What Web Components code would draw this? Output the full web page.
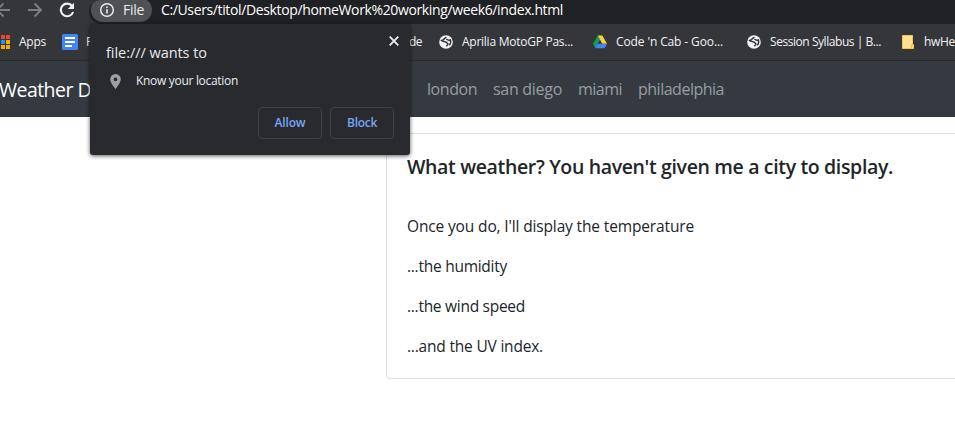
<!DOCTYPE html>
<html lang="en"><head><meta charset="utf-8"><title>Weather Dashboard</title>
<style>html,body{margin:0;width:955px;height:445px;overflow:hidden;background:#fff}</style></head>
<body><weather-window></weather-window>
<script>
const define = (name, html, setup) => customElements.define(name, class extends HTMLElement {
  connectedCallback() {
    if (this.shadowRoot) return;
    const t = document.createElement('template');
    t.innerHTML = html;
    this.attachShadow({mode: 'open'}).append(t.content.cloneNode(true));
    if (setup) setup(this, this.shadowRoot);
  }
});

/* A line of text tracked so that it occupies the width in its "w" attribute. */
define('fit-text', `<style>:host{display:inline-block;white-space:pre;flex:none}span{display:inline-block}</style><span><slot></slot></span>`, (el, root) => {
  const s = root.querySelector('span'), w = +el.getAttribute('w');
  if (w) {
    el.style.width = w + 'px';
    s.style.letterSpacing = (w - s.getBoundingClientRect().width) / el.textContent.length + 'px';
  }
});

const icons = {
  back: ['0 0 16 16', '<path d="M15 8H2M8.5 1.5 2 8l6.500 6.500" fill="none" stroke="#7d7e81" stroke-width="1.900"/>'],
  forward: ['0 0 16 16', '<path d="M1 8h13M7.500 1.500 14 8l-6.500 6.500" fill="none" stroke="#7d7e81" stroke-width="1.900"/>'],
  reload: ['0 0 16 16', '<path d="M13.200 4.200A6.300 6.300 0 1 0 14.100 10" fill="none" stroke="#f1f3f4" stroke-width="2.100"/><path d="M15 .8V7H8.800z" fill="#f1f3f4"/>'],
  info: ['0 0 16 16', '<circle cx="8" cy="8" r="6.300" fill="none" stroke="#e8eaed" stroke-width="1.500"/><path d="M7.200 7.200h1.600v4.200H7.200zM7.200 4.500h1.600v1.600H7.200z" fill="#e8eaed"/>'],
  apps: ['0 0 14 14', '<path fill="#ea4335" d="M0 0h3v4H0zM5 0h4v4H5zM10 0h4v4h-4z"/><path fill="#34a853" d="M0 5h3v4H0z"/><path fill="#2196f3" d="M5 5h4v4H5z"/><path fill="#f9ab00" d="M10 5h4v4h-4zM5 10h4v4H5zM10 10h4v4h-4z"/>'],
  docs: ['0 0 16 16', '<rect width="16" height="16" rx="1.500" fill="#4285f4"/><path fill="#fff" d="M3 3h10v2H3zM3 7h10v2H3zM3 11h7v2H3z"/>'],
  globe: ['0 0 16 16', '<circle cx="8" cy="8" r="7.800" fill="#f1f3f4"/><path d="M8.500 2.500C5.500 3.500 6.700 5.300 3 6.200c1.700 1.600 2.900 1.500 4.600 1.700 1.500.2.900 1.600 2.300 1.800.8.500-.3 1.900-1.500 3.200M8.500 4.600c1.300 1.300 2.600 1.600 4.500 1.100.8 2.500.2 4.500-1.300 6.100" fill="none" stroke="#35363a" stroke-width="1.700"/>'],
  drive: ['0 0 15 14', '<path fill="#0f9d58" d="M5 0 0 9l2.500 4.600L7.500 4.500z"/><path fill="#ffcd40" d="M5 0h5l5 9h-5z"/><path fill="#4285f4" d="M5 9h10l-2.500 4.700h-10z"/>'],
  note: ['0 0 12 14', '<path fill="#fde293" stroke="#f0c846" d="M.5.5h10v9h1v4H.5z"/><path d="M9.500 10v3.500M9 10h2" stroke="#e8bd37" fill="none"/>'],
  pin: ['0 0 11 15', '<path fill="#9aa0a6" fill-rule="evenodd" d="M5.500 0A5.300 5.300 0 0 0 .2 5.300C.2 9 5.500 15 5.500 15s5.300-6 5.300-9.700A5.300 5.300 0 0 0 5.500 0zm0 3.400a1.900 1.900 0 1 1 0 3.800 1.900 1.900 0 0 1 0-3.800z"/>'],
  close: ['0 0 10 10', '<path d="m.7.7 8.600 8.600M9.300.7.7 9.300" stroke="#e8eaed" stroke-width="1.900"/>']
};
define('ui-icon', `<style>:host{display:block;flex:none}svg{display:block;width:100%;height:100%}</style><svg></svg>`, (el, root) => {
  const [box, art] = icons[el.getAttribute('name')], s = root.querySelector('svg');
  s.setAttribute('viewBox', box); s.innerHTML = art;
});

define('address-bar', `<style>
:host{display:flex;height:24px;background:#35363a;font:14px/20px "Open Sans","Noto Sans",sans-serif;color:#fff}
.nav{width:89px;display:flex;flex:none;overflow:hidden}
ui-icon{width:16px;height:16px;margin-top:2px}
.back{margin-left:-5px}.fwd{margin-left:16px}.rel{margin-left:16px}
.box{flex:1;display:flex;background:#202124;border-radius:14px 0 0 14px;align-items:flex-start;overflow:hidden}
.chip{box-sizing:border-box;display:flex;width:61px;height:24px;margin:-2px 0 0 2px;border-radius:12px;background:#505154;padding:2px 0 0 8px;color:#e8eaed}
.chip fit-text{margin-left:8px}.url{margin-left:9px}
</style><div class="nav"><ui-icon class="back" name="back"></ui-icon><ui-icon class="fwd" name="forward"></ui-icon><ui-icon class="rel" name="reload"></ui-icon></div>
<div class="box"><div class="chip"><ui-icon name="info"></ui-icon><fit-text w="21">File</fit-text></div><fit-text class="url" w="402">C:/Users/titol/Desktop/homeWork%20working/week6/index.html</fit-text></div>`);

define('book-mark', `<style>:host{display:flex;align-items:center;flex:none;height:35px;box-sizing:border-box;overflow:hidden}slot{display:block}</style><slot name="icon"></slot><slot></slot>`);
define('bookmarks-bar', `<style>
:host{display:flex;height:37px;box-sizing:border-box;background:#35363a;border-bottom:1px solid #292a2d;font:12px/17px "Open Sans","Noto Sans",sans-serif;color:#f1f3f4}
ui-icon{width:14px;height:14px}fit-text{margin-left:9px}
</style>
<book-mark style="width:62px"><ui-icon slot="icon" name="apps" style="margin-left:-4px"></ui-icon><fit-text w="27">Apps</fit-text></book-mark>
<book-mark style="width:346px"><ui-icon slot="icon" name="docs" style="width:16px;height:16px"></ui-icon><fit-text style="margin-left:8px">F</fit-text></book-mark>
<book-mark style="width:31px"><fit-text w="13" style="margin-left:1px">de</fit-text></book-mark>
<book-mark style="width:154px"><ui-icon slot="icon" name="globe"></ui-icon><fit-text w="111">Aprilia MotoGP Pas...</fit-text></book-mark>
<book-mark style="width:154px"><ui-icon slot="icon" name="drive"></ui-icon><fit-text w="107">Code 'n Cab - Goo...</fit-text></book-mark>
<book-mark style="width:155px"><ui-icon slot="icon" name="globe"></ui-icon><fit-text w="111">Session Syllabus | B...</fit-text></book-mark>
<book-mark style="width:53px"><ui-icon slot="icon" name="note" style="width:12px"></ui-icon><fit-text w="31" style="margin-left:10px">hwHe</fit-text></book-mark>`);

define('city-nav', `<style>
:host{display:flex;align-items:center;height:56px;background:#343a40;color:#fff;font:16px/24px "Open Sans","Noto Sans",sans-serif}
.brand{font-size:19.500px;margin:2px 0 0 -1px;width:402px}
nav{display:flex;gap:16px;color:#999da0}
</style><div class="brand"><fit-text w="92">Weather D</fit-text></div>
<nav><fit-text w="10">o</fit-text><fit-text w="50">london</fit-text><fit-text w="69">san diego</fit-text><fit-text w="44">miami</fit-text><fit-text w="86">philadelphia</fit-text></nav>`);

define('weather-card', `<style>
:host{display:block;box-sizing:border-box;width:600px;height:246px;margin:16px 0 0 386px;border:1px solid #dfdfdf;border-radius:4px;padding:21px 20px 20px;color:#212529;font:15.500px/24px "Open Sans","Noto Sans",sans-serif}
h5{margin:0 0 35px;font-size:19.500px;line-height:24px;font-weight:600}
</style><h5><slot name="title"></slot></h5><slot></slot>`);

define('permission-popup', `<style>
:host{display:block;position:absolute;left:90px;top:24px;width:320px;height:131px;box-sizing:border-box;padding:18px 16px 16px;background:#292a2d;border-radius:0 2px 3px 3px;box-shadow:0 1px 4px rgba(0,0,0,.65);color:#e8eaed;font:12px/18px "Open Sans","Noto Sans",sans-serif}
header{display:flex;justify-content:space-between;font-size:14.500px;line-height:21px}
header ui-icon{width:10px;height:10px;margin:-6px -5px 0 0}
.ask{display:flex;align-items:center;height:18px;margin:9px 0 17px}
.ask ui-icon{width:11px;height:15px;margin:0 15px 0 4px}
footer{display:flex;justify-content:flex-end;gap:8px}
button{box-sizing:border-box;width:64px;height:32px;padding:0;background:none;border:1px solid #3f4145;border-radius:4px;font:600 12px/18px "Open Sans","Noto Sans",sans-serif;color:#76a5f5}
</style><header><fit-text w="101">file:/// wants to</fit-text><ui-icon name="close"></ui-icon></header>
<div class="ask"><ui-icon name="pin"></ui-icon><fit-text w="102">Know your location</fit-text></div>
<footer><button><fit-text w="31">Allow</fit-text></button><button><fit-text w="30">Block</fit-text></button></footer>`);

define('weather-window', `<style>:host{display:block;position:relative;width:955px;height:445px;overflow:hidden;background:#fff}p{margin:0 0 16px}</style>
<address-bar></address-bar><bookmarks-bar></bookmarks-bar><city-nav></city-nav>
<weather-card><fit-text slot="title" w="486">What weather? You haven't given me a city to display.</fit-text>
<p><fit-text w="287">Once you do, I'll display the temperature</fit-text></p><p><fit-text w="100">...the humidity</fit-text></p><p><fit-text w="118">...the wind speed</fit-text></p><p><fit-text w="136">...and the UV index.</fit-text></p></weather-card>
<permission-popup></permission-popup>`);
</script></body></html>
